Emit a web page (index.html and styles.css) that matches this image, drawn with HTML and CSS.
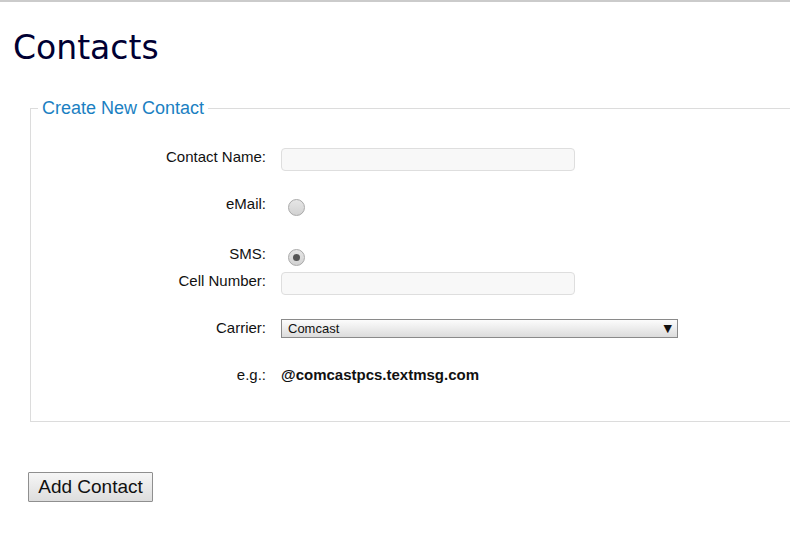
FILE: index.html
```html
<!DOCTYPE html>
<html>
<head>
<meta charset="utf-8">
<link rel="stylesheet" href="styles.css">
</head>
<body>
<div class="topbar"></div>
<h1 class="title">Contacts</h1>
<form class="contact-form">
  <fieldset class="group">
    <legend class="group-title">Create New Contact</legend>
    <div class="row row-name">
      <label class="lbl">Contact Name:</label>
      <div class="ctl"><input class="text-input" type="text"></div>
    </div>
    <div class="row row-email">
      <label class="lbl">eMail:</label>
      <div class="ctl"><span class="radio"></span></div>
    </div>
    <div class="row row-sms">
      <label class="lbl">SMS:</label>
      <div class="ctl"><span class="radio checked"></span></div>
    </div>
    <div class="row row-cell">
      <label class="lbl">Cell Number:</label>
      <div class="ctl"><input class="text-input" type="text"></div>
    </div>
    <div class="row row-carrier">
      <label class="lbl">Carrier:</label>
      <div class="ctl"><div class="select"><span class="select-text">Comcast</span><span class="select-arrow">▼</span></div></div>
    </div>
    <div class="row row-eg">
      <label class="lbl">e.g.:</label>
      <div class="ctl"><span class="example">@comcastpcs.textmsg.com</span></div>
    </div>
  </fieldset>
  <div class="actions"><button type="button" class="btn">Add Contact</button></div>
</form>
</body>
</html>
```
FILE: styles.css
```css
html, body {
  margin: 0;
  padding: 0;
  background: #fff;
}
body {
  font-family: "Liberation Sans", Arial, sans-serif;
  color: #111;
  overflow: hidden;
}
.topbar {
  height: 2px;
  background: #cbcbcb;
}
.title {
  font-family: "DejaVu Sans", Verdana, sans-serif;
  font-weight: normal;
  font-size: 33px;
  line-height: 38px;
  color: #000033;
  margin: 27px 0 0 13px;
}
.contact-form {
  padding-left: 30px;
}
.group {
  margin: 31px 0 0 0;
  border: 1px solid #dcdcdc;
  border-right: 0;
  padding: 0 7px 38px 7px;
  min-width: 0;
}
.group-title {
  font-size: 18px;
  line-height: 20px;
  color: #1b7fc2;
  padding: 0 4px;
}
.row {
  display: grid;
  grid-template-columns: 228px 420px;
  column-gap: 15px;
  align-items: start;
}
.lbl {
  font-size: 15px;
  line-height: 17px;
  text-align: right;
  color: #111;
}
.row-name { margin-top: 30px; }
.row-email { margin-top: 24px; }
.row-sms { margin-top: 29px; }
.row-cell { margin-top: 6px; }
.row-carrier { margin-top: 24px; }
.row-eg { margin-top: 28px; }

.text-input {
  display: block;
  box-sizing: border-box;
  width: 294px;
  height: 23px;
  margin: 0;
  border: 1px solid #dedede;
  border-radius: 4px;
  background: #f8f8f8;
}
.radio {
  display: block;
  box-sizing: border-box;
  width: 17px;
  height: 17px;
  margin-left: 7px;
  border-radius: 50%;
  border: 1px solid #a9a9a9;
  background: linear-gradient(#e6e6e6, #d2d2d2);
  position: relative;
}
.row-email .radio { margin-top: 4px; }
.row-sms .radio { margin-top: 4px; }
.radio.checked::after {
  content: "";
  position: absolute;
  left: 4px;
  top: 4px;
  width: 7px;
  height: 7px;
  border-radius: 50%;
  background: #555;
}
.select {
  box-sizing: border-box;
  width: 397px;
  height: 19px;
  border: 1px solid #8a8a8a;
  background: linear-gradient(#fcfcfc, #dcdcdc);
  display: flex;
  align-items: center;
  justify-content: space-between;
  padding: 0 5px 0 6px;
  font-size: 13px;
  color: #111;
}
.select-arrow {
  font-size: 11px;
  font-family: "DejaVu Sans", sans-serif;
}
.example {
  font-size: 15px;
  line-height: 17px;
  font-weight: bold;
  display: block;
}
.actions {
  margin-top: 50px;
}
.btn {
  box-sizing: border-box;
  width: 125px;
  height: 30px;
  margin: 0 0 0 -2px;
  padding: 0;
  font-family: "Liberation Sans", Arial, sans-serif;
  font-size: 19px;
  color: #111;
  border: 1px solid #8f8f8f;
  border-radius: 1px;
  background: linear-gradient(#f6f6f6, #dddddd);
}
```
